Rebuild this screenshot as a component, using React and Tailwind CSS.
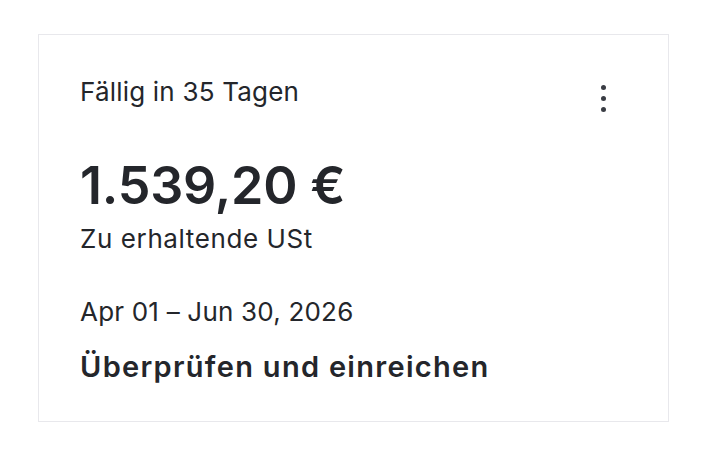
export default function App() {
  return (
    <div className="min-h-screen bg-white pt-[34px] pl-[38px]" style={{ fontFamily: "Inter, 'Noto Sans', sans-serif" }}>
      <div className="w-[631px] h-[388px] border border-[#e8e8ec] bg-white px-[41px] pt-[41px] text-[#24262b]">
        <div className="flex items-start justify-between">
          <div className="text-[26px] leading-[32px] tracking-[0.2px]">Fällig in 35 Tagen</div>
          <div className="flex flex-col gap-[6px] pt-[9px] pr-[21px]">
            <span className="w-[5px] h-[5px] rounded-full bg-[#3a3d44]" />
            <span className="w-[5px] h-[5px] rounded-full bg-[#3a3d44]" />
            <span className="w-[5px] h-[5px] rounded-full bg-[#3a3d44]" />
          </div>
        </div>
        <div className="mt-[44px] text-[52px] leading-[60px] font-semibold tracking-[-0.2px]">1.539,20 €</div>
        <div className="mt-[7px] text-[26px] leading-[32px] tracking-[0.6px]">Zu erhaltende USt</div>
        <div className="mt-[41px] text-[26px] leading-[32px] tracking-[0.2px]">Apr 01 – Jun 30, 2026</div>
        <div className="mt-[21px] text-[29px] leading-[36px] font-semibold tracking-[1.3px]">Überprüfen und einreichen</div>
      </div>
    </div>
  );
}
